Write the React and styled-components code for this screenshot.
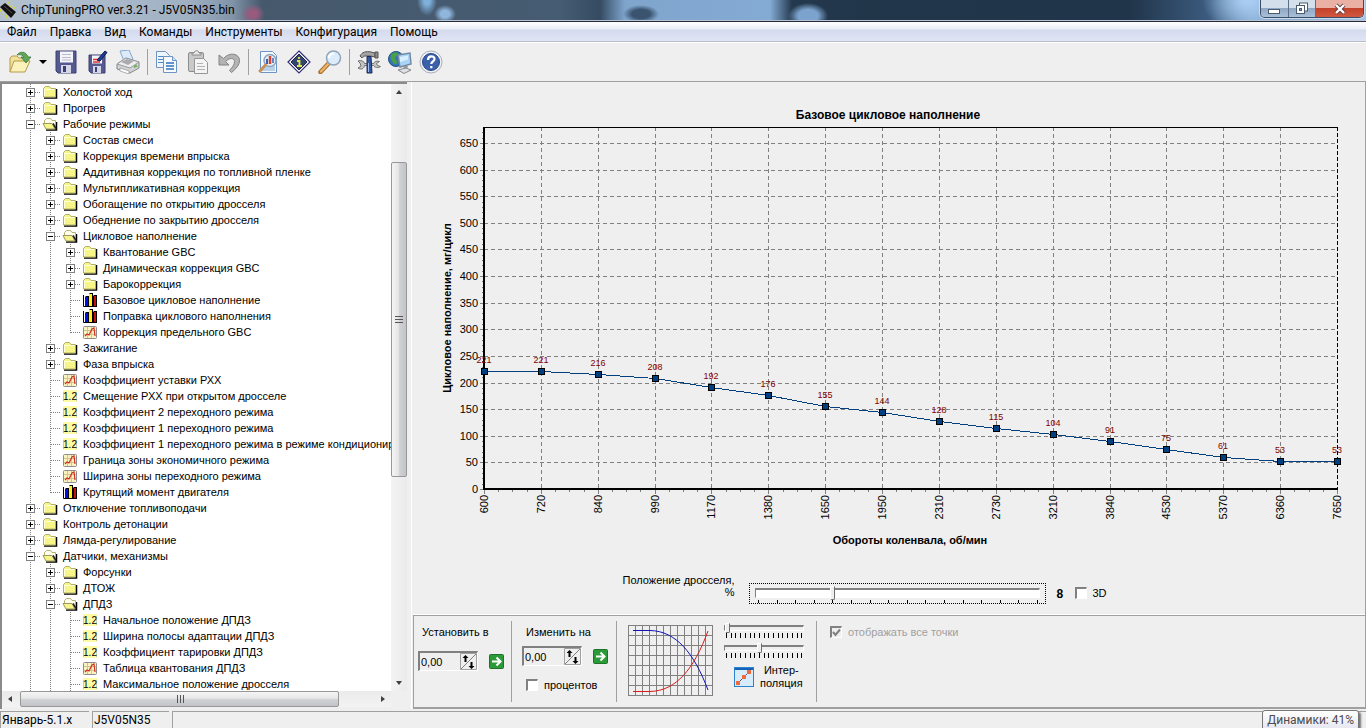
import { useState } from "react";
import styled, { createGlobalStyle } from "styled-components";

const GlobalStyle = createGlobalStyle`
  * { box-sizing: border-box; }
  body {
    margin: 0;
    background: #fff;
    color: #000;
    font: 11px/14px "Liberation Sans", Arial, sans-serif;
  }
  button, input { font: inherit; color: inherit; }
`;

/* ---------- window frame ---------- */

const Window = styled.div`
  position: relative;
  display: flex;
  flex-direction: column;
  height: 100vh;
  margin-right: 6px;
  background: #efefef;
  overflow: hidden;
`;

const TitleBar = styled.header`
  display: flex;
  align-items: flex-start;
  height: 22px;
  flex: none;
  border-bottom: 1px solid #232b3a;
  box-shadow: inset 0 -1px 0 #b9c3d2;
  background:
    radial-gradient(ellipse 12px 10px at 253px 14px, #9a5a7e 30%, transparent),
    radial-gradient(ellipse 11px 9px at 445px 14px, #8fb6dc 40%, transparent),
    radial-gradient(ellipse 10px 16px at 427px 0, #7fb0dc 30%, transparent),
    radial-gradient(ellipse 18px 9px at 641px 14px, #3a536f 50%, transparent),
    radial-gradient(ellipse 20px 13px at 808px 16px, #7ba3cd 50%, transparent),
    radial-gradient(ellipse 46px 34px at 1248px 0, #a9cdf2 10%, transparent),
    linear-gradient(
      90deg,
      #b3c1cf 0,
      #acbccc 90px,
      #9fb0c3 190px,
      #8194a8 232px,
      #46596c 262px,
      #465c72 560px,
      #344b62 600px,
      #7fa5cd 625px,
      #84abd4 770px,
      #24394e 792px,
      #22364a 860px,
      #21354a 1130px,
      #3c5c80 1210px,
      #7ba0c8 1250px,
      #a8c4e2 100%
    );
`;

const Title = styled.h1`
  display: flex;
  align-items: center;
  gap: 4px;
  flex: 1;
  height: 20px;
  margin: 0;
  font: 12px/20px Roboto, "Open Sans", sans-serif;
  svg { flex: none; }
`;

const Caption = styled.div`
  display: flex;
  width: 104px;
  height: 18px;
  margin-right: 2px;
  border: 1px solid #3b4d63;
  border-top: 0;
  border-radius: 0 0 5px 5px;
  overflow: hidden;
  box-shadow: 0 0 0 1px #c8daec;
`;

const CaptionButton = styled.button`
  display: grid;
  place-items: center;
  flex: ${(p) => (p.$close ? 47 : 27)};
  padding: 0;
  border: 0;
  border-left: 1px solid #5c6f86;
  background: ${(p) =>
    p.$close
      ? "linear-gradient(#eab0a3 0 45%, #c2402a 46%, #d0583f)"
      : "linear-gradient(#d3dfeb 0 45%, #8ea6c2 46%, #a9c0da)"};
  &:first-child { border-left: 0; }
`;

const MenuBar = styled.nav`
  display: flex;
  gap: 13px;
  flex: none;
  height: 20px;
  padding: 0 7px;
  border-bottom: 1px solid #b9bdca;
  background: linear-gradient(#fff, #e9edf6 7px, #d4dbed 8px, #e0e5f5);
  font: 12px/20px Roboto, "Open Sans", sans-serif;
`;

const MenuItem = styled.a`
  color: #000;
  text-decoration: none;
`;

const ToolBar = styled.div`
  display: flex;
  align-items: center;
  flex: none;
  height: 40px;
  padding-left: 4px;
  border-top: 1px solid #fff;
  border-bottom: 1px solid #a0a0a0;
`;

const ToolButton = styled.button`
  display: grid;
  place-items: center;
  width: ${(p) => (p.$narrow ? 15 : 31)}px;
  height: 30px;
  padding: 0;
  border: 0;
  background: none;
`;

const ToolSeparator = styled.i`
  width: 1px;
  height: 26px;
  margin: 0 3px 0 4px;
  background: #a0a0a0;
`;

const Body = styled.div`
  display: flex;
  flex: 1;
  min-height: 0;
`;

/* ---------- tree ---------- */

const TreePane = styled.aside`
  flex: none;
  width: 412px;
  padding-right: 4px;
  border-right: 1px solid #fff;
`;

const TreeFrame = styled.div`
  display: grid;
  grid-template: minmax(0, 1fr) 16px / minmax(0, 1fr) 16px;
  height: 100%;
  padding-bottom: 2px;
  border-left: 2px solid #8a8a8a;
  border-top: 2px solid #8a8a8a;
`;

const Tree = styled.ul`
  margin: 0;
  padding: 0 0 0 18px;
  overflow: hidden;
  list-style: none;
  background: #fff;
`;

const TreeRow = styled.li`
  display: flex;
  align-items: center;
  height: 16px;
  white-space: nowrap;
  line-height: 16px;
  svg { flex: none; display: block; }
`;

const TreeToggle = styled.button`
  flex: none;
  padding: 0;
  border: 0;
  background: none;
`;

const TreeLabel = styled.span`
  padding-left: 5px;
`;

const ScrollBar = styled.div`
  display: flex;
  flex-direction: ${(p) => (p.$horizontal ? "row" : "column")};
  align-items: stretch;
  background: linear-gradient(${(p) => (p.$horizontal ? "0deg" : "90deg")}, #f3f3f3, #ebebeb);
`;

const ScrollButton = styled.button`
  display: grid;
  place-items: center;
  flex: none;
  width: 16px;
  height: 16px;
  padding: 0;
  border: 0;
  background: none;
`;

const ScrollTrack = styled.div`
  flex: ${(p) => p.$size};
`;

const ScrollThumb = styled.div`
  display: grid;
  place-items: center;
  flex: ${(p) => p.$size};
  border: 1px solid #979797;
  border-radius: 2px;
  background: linear-gradient(${(p) => (p.$horizontal ? "180deg" : "90deg")}, #f5f5f5, #e6e6e8 45%, #d0d1d4 55%, #c2c4c8);
`;

/* ---------- chart ---------- */

const Main = styled.main`
  display: flex;
  flex-direction: column;
  flex: 1;
  min-width: 0;
  border-right: 1px solid #a0a0a0;
`;

const ChartSvg = styled.svg`
  display: block;
  width: 100%;
  min-height: 0;
  font: 11px "Liberation Sans", Arial, sans-serif;
`;

const ThrottleRow = styled.div`
  display: flex;
  justify-content: center;
  align-items: flex-end;
  height: 42px;
  padding: 12px 49px 0 0;
`;

const ThrottleLabel = styled.label`
  align-self: flex-start;
  width: 114px;
  margin-right: 14px;
  text-align: right;
  line-height: 12px;
`;

const ThrottleBox = styled.div`
  width: 297px;
  height: 21px;
  padding: 1px 5px 0;
  border: 1px dotted #000;
  svg { display: block; }
`;

const Slider = styled.input`
  display: block;
  appearance: none;
  width: 100%;
  height: ${(p) => (p.$small ? 11 : 15)}px;
  margin: 0;
  background: none;
  &::-webkit-slider-runnable-track {
    height: ${(p) => (p.$small ? 6 : 10)}px;
    background: ${(p) => (p.$small ? "#efefef" : "#fff")};
    border: 1px solid #fff;
    border-top: 2px solid #808080;
    border-left: 1px solid #808080;
  }
  &::-webkit-slider-thumb {
    appearance: none;
    width: 5px;
    height: ${(p) => (p.$small ? 10 : 14)}px;
    margin-top: -4px;
    background: #efefef;
    border: 1px solid #fff;
    border-right-color: #6c6c6c;
    border-bottom-color: #6c6c6c;
    border-radius: 0 0 2px 2px;
  }
`;

const ThrottleValue = styled.output`
  margin-left: 11px;
  width: 18px;
  font-weight: bold;
  font-size: 12px;
  line-height: 20px;
`;

const CheckLabel = styled.label`
  display: flex;
  align-items: center;
  gap: 6px;
  height: 14px;
  color: ${(p) => (p.$disabled ? "#a0a0a0" : "#000")};
`;

const ThrottleCheck = styled.div`
  width: 33px;
  margin-bottom: 4px;
`;

const CheckBox = styled.input`
  appearance: none;
  width: 12px;
  height: 12px;
  margin: 0;
  background: #fff;
  border: 1px solid #fff;
  border-top: 2px solid #808080;
  border-left: 2px solid #808080;
  &:disabled { background: #efefef; }
  &:checked {
    background: #efefef
      url("data:image/svg+xml,%3Csvg xmlns='http://www.w3.org/2000/svg' viewBox='0 0 9 9'%3E%3Cpath d='M1 4l2.5 3L8 1.5' fill='none' stroke='%23808080' stroke-width='2'/%3E%3C/svg%3E")
      center / 9px no-repeat;
  }
`;

/* ---------- edit panel ---------- */

const EditPanel = styled.section`
  display: flex;
  flex: none;
  height: 94px;
  margin: auto 0 0 1px;
  padding: 5px 0;
  border: 1px solid #a0a0a0;
  border-width: 1px 0 2px 1px;
  box-shadow: 0 -1px 0 #fff;
`;

const EditGroup = styled.div`
  display: flex;
  flex-direction: ${(p) => (p.$row ? "row" : "column")};
  gap: ${(p) => p.$gap || 0}px;
  width: ${(p) => (p.$width ? `${p.$width}px` : "auto")};
  padding: 4px 0 0 ${(p) => p.$indent}px;
  & + & { border-left: 1px solid #a0a0a0; }
`;

const EditCaption = styled.label`
  padding-left: 4px;
`;

const SpinRow = styled.div`
  display: flex;
  align-items: center;
  gap: 11px;
`;

const Spin = styled.div`
  display: flex;
  width: 60px;
  height: 20px;
  border: 1px solid #fff;
  border-top: 2px solid #808080;
  border-left: 2px solid #808080;
`;

const SpinInput = styled.input`
  flex: 1;
  min-width: 0;
  padding: 0 1px;
  border: 0;
  background: none;
`;

const IconButton = styled.button`
  display: flex;
  align-items: center;
  gap: 6px;
  padding: 0;
  border: 0;
  background: none;
  text-align: center;
  line-height: 13px;
`;

const CheckLine = styled.div`
  padding: 5px 0 0 4px;
`;

const CurveSliders = styled.div`
  display: flex;
  flex-direction: column;
  width: 80px;
  margin-top: -3px;
  svg { display: block; }
`;

const Curve = styled.div`
  height: 20px;
`;

const Interpolation = styled(IconButton)`
  padding-left: 10px;
  margin-top: 2px;
`;

/* ---------- status bar ---------- */

const StatusBar = styled.footer`
  display: flex;
  gap: 3px;
  flex: none;
  height: 17px;
  margin-top: 2px;
  font: 12px/17px Roboto, "Open Sans", sans-serif;
`;

const StatusPane = styled.div`
  width: ${(p) => (p.$width ? `${p.$width}px` : "auto")};
  flex: ${(p) => (p.$width ? "none" : 1)};
  padding-left: 1px;
  border: 1px solid #a0a0a0;
  border-width: 1px 0 0 1px;
  white-space: nowrap;
  overflow: hidden;
`;

const Tooltip = styled.div`
  position: absolute;
  right: 7px;
  bottom: -3px;
  padding: 0 4px;
  border: 1px solid #767676;
  border-radius: 3px;
  background: linear-gradient(#fff, #e4e5f0);
  box-shadow: 2px 2px 2px #777;
  color: #4c4c4c;
  font: 12px/19px Roboto, "Open Sans", sans-serif;
`;

/* ---------- data ---------- */

const menu = ["Файл", "Правка", "Вид", "Команды", "Инструменты", "Конфигурация", "Помощь"];

// [guides, icon, label]; guides, one per level:
// | line, + closed, - open, t leaf, L last leaf
const tree = [
  ["+", "folder", "Холостой ход"],
  ["+", "folder", "Прогрев"],
  ["-", "open", "Рабочие режимы"],
  ["|+", "folder", "Состав смеси"],
  ["|+", "folder", "Коррекция времени впрыска"],
  ["|+", "folder", "Аддитивная коррекция по топливной пленке"],
  ["|+", "folder", "Мультипликативная коррекция"],
  ["|+", "folder", "Обогащение по открытию дросселя"],
  ["|+", "folder", "Обеднение по закрытию дросселя"],
  ["|-", "open", "Цикловое наполнение"],
  ["||+", "folder", "Квантование GBC"],
  ["||+", "folder", "Динамическая коррекция GBC"],
  ["||+", "folder", "Барокоррекция"],
  ["||t", "bars", "Базовое цикловое наполнение"],
  ["||t", "bars", "Поправка циклового наполнения"],
  ["||L", "curve", "Коррекция предельного GBC"],
  ["|+", "folder", "Зажигание"],
  ["|+", "folder", "Фаза впрыска"],
  ["|t", "curve", "Коэффициент уставки РХХ"],
  ["|t", "number", "Смещение РХХ при открытом дросселе"],
  ["|t", "number", "Коэффициент 2 переходного режима"],
  ["|t", "number", "Коэффициент 1 переходного режима"],
  ["|t", "number", "Коэффициент 1 переходного режима в режиме кондиционир"],
  ["|t", "curve", "Граница зоны экономичного режима"],
  ["|t", "curve", "Ширина зоны переходного режима"],
  ["|L", "bars", "Крутящий момент двигателя"],
  ["+", "folder", "Отключение топливоподачи"],
  ["+", "folder", "Контроль детонации"],
  ["+", "folder", "Лямда-регулирование"],
  ["-", "open", "Датчики, механизмы"],
  ["|+", "folder", "Форсунки"],
  ["|+", "folder", "ДТОЖ"],
  ["|-", "open", "ДПДЗ"],
  ["||t", "number", "Начальное положение ДПДЗ"],
  ["||t", "number", "Ширина полосы адаптации ДПДЗ"],
  ["||t", "number", "Коэффициент тарировки ДПДЗ"],
  ["||t", "curve", "Таблица квантования ДПДЗ"],
  ["||t", "number", "Максимальное положение дросселя"],
];

const rpm = [600, 720, 840, 990, 1170, 1380, 1650, 1950, 2310, 2730, 3210, 3840, 4530, 5370, 6360, 7650];
const fill = [221, 221, 216, 208, 192, 176, 155, 144, 128, 115, 104, 91, 75, 61, 53, 53];

/* ---------- tree pieces ---------- */

const Guide = ({ kind }) => {
  const box = kind === "+" || kind === "-";
  return (
    <svg width="20" height="16" aria-hidden="true">
      <g stroke="#808080" strokeDasharray="1 1">
        <path d={kind === "L" ? "M10.5 0V9" : "M10.5 0V16"} />
        {kind !== "|" && <path d="M11 8.5H21" />}
      </g>
      {box && (
        <>
          <rect x="6.5" y="4.5" width="8" height="8" fill="#fff" stroke="#808080" />
          <path d={kind === "+" ? "M8 8.5h5M10.5 6v5" : "M8 8.5h5"} stroke="#000" />
        </>
      )}
    </svg>
  );
};

const treeIcons = {
  folder: (
    <>
      <path d="M2 14h12.500V5" fill="none" stroke="#000" strokeWidth="1.500" />
      <path d="M1.500 13V4.500l2-2h4l1.500 2h4.500V13z" fill="#f8f588" stroke="#b3b06a" />
      <path d="M2.500 12V5.500h10" fill="none" stroke="#fffde0" />
    </>
  ),
  open: (
    <>
      <path d="M4 14h10.500V6" fill="none" stroke="#000" strokeWidth="1.500" />
      <path d="M2.500 8V4.500l2-2h4l1.500 2h3.500V13" fill="#fffef0" stroke="#b3b06a" />
      <path d="M1 7.500h9L13 13H4z" fill="#f8f588" stroke="#9a9860" />
      <path d="M11 7.500l3 5" stroke="#222" strokeWidth="1.500" />
    </>
  ),
  bars: (
    <>
      <path d="M1.500 3v11.500H15" fill="none" stroke="#000" />
      <path d="M3 5l1-1h3v10H3zM7 2l1-1h3v13H7zM11 4l1-1h3v11h-4z" fill="#000" />
      <path d="M3 5h3v9H3z" fill="#0010e0" />
      <path d="M7 2h3v12H7z" fill="#ffee20" />
      <path d="M12 4h2v10h-2z" fill="#c01515" />
    </>
  ),
  curve: (
    <>
      <rect x="1.500" y="2.500" width="13" height="12" rx="1" fill="#fbf3c4" stroke="#8d8d8d" />
      <path d="M5.500 3v11M9.500 3v11M2 6.500h12M2 10.500h12" stroke="#cfc690" />
      <path d="M3 12l2-2 2 1 3-6 2-1 1 8" fill="none" stroke="#d03020" strokeWidth="1.200" />
    </>
  ),
  number: (
    <>
      <path d="M1 2h14v12H1z" fill="#fdfba4" />
      <path d="M1.500 4v9M14.500 4v9" stroke="#c9c9b0" />
      <text x="8" y="12" fontSize="10" textAnchor="middle">1.2</text>
    </>
  ),
};

const TreeItem = ({ guides, icon, label }) => (
  <TreeRow>
    {[...guides].map((kind, i) =>
      kind === "+" || kind === "-" ? (
        <TreeToggle key={i} aria-label={label} aria-expanded={kind === "-"}>
          <Guide kind={kind} />
        </TreeToggle>
      ) : (
        <Guide key={i} kind={kind} />
      )
    )}
    <svg width="18" height="16" viewBox="-2 0 18 16" aria-hidden="true">{treeIcons[icon]}</svg>
    <TreeLabel>{label}</TreeLabel>
  </TreeRow>
);

/* ---------- toolbar icons ---------- */

const Floppy = () => (
  <>
    <path d="M2 1h20v22H4l-2-2z" fill="#54598f" stroke="#3c4073" />
    <path d="M6 1.500h13v11H6z" fill="#f4f4fa" />
    <path d="M8 4.500h9M8 7.500h9M8 10h9" stroke="#b9bccb" />
    <path d="M7 15h10v8H7z" fill="#d5d7e6" />
    <path d="M9 16h3v6H9z" fill="#3c4073" />
  </>
);

const toolIcons = {
  open: (
    <>
      <path d="M2 22V8l2-2h5l2 2h8v3" fill="#f0e09a" stroke="#b59b48" />
      <path d="M2 22l4-11h16l-5 11z" fill="#fbf1bb" stroke="#b59b48" />
      <path d="M9 5c3-4 9-4 11 2h3l-5 6-5-6h3c-1-2-4-3-7-2z" fill="#62a758" stroke="#3a7a38" strokeWidth=".8" />
    </>
  ),
  save: <Floppy />,
  saveAs: (
    <>
      <path d="M4 5h16v18H6l-2-2z" fill="#54598f" stroke="#3c4073" />
      <path d="M7 5.500h10v8H7z" fill="#f4f4fa" />
      <path d="M8 12h7M8 9.500h5" stroke="#d33" strokeWidth="1.500" />
      <path d="M8 16h8v7H8z" fill="#d5d7e6" />
      <path d="M10 17h2v5h-2z" fill="#3c4073" />
      <path d="M12 10l8-9 2 1.500-7 8.500z" fill="#1c3f94" stroke="#0c1c50" />
    </>
  ),
  print: (
    <>
      <path d="M4 1l9-1 4 9-9 2z" fill="#dcebfb" stroke="#86a6cc" />
      <path d="M1 14l9-6 13 4v6l-9 5-13-4z" fill="#d2d3d5" stroke="#85878b" />
      <path d="M1 14l13 4 9-6-13-4z" fill="#ededee" stroke="#9a9b9f" />
      <path d="M5 12l6-3 7 2-6 4z" fill="#a9abb0" />
      <path d="M4 18l9 3v3l-9-3z" fill="#fff" stroke="#909296" strokeWidth=".7" />
      <path d="M18 17l3-1.500" stroke="#6bb05b" strokeWidth="2" />
    </>
  ),
  copy: (
    <>
      <path d="M1.500 1.500h9l4 4v12h-13z" fill="#eef5fd" stroke="#6f93c2" />
      <path d="M3 6.500h8M3 9.500h8M3 12.500h6" stroke="#4d8ac8" />
      <path d="M8.500 6.500h9l4 4v12h-13z" fill="#f5faff" stroke="#6f93c2" />
      <path d="M17.500 6.500v4h4" fill="#cfe0f3" stroke="#6f93c2" />
      <path d="M11 13h8M11 16h8M11 19h8" stroke="#2f73bb" strokeWidth="1.500" />
    </>
  ),
  paste: (
    <>
      <rect x="2.500" y="2.500" width="15" height="19" rx="1.500" fill="#c9c9c9" stroke="#8c8c8c" />
      <path d="M6 5V3h2c0-3 5-3 5 0h2v2z" fill="#e8e8e8" stroke="#8c8c8c" />
      <path d="M8.500 8.500h9l4 4v11h-13z" fill="#f4f4f4" stroke="#969696" />
      <path d="M11 13.500h6M11 16.500h8M11 19.500h8" stroke="#b1b1b1" />
    </>
  ),
  undo: (
    <path
      d="M2 5v10h10l-3.500-3.500c4-4 9-4 9 0 0 3-1.500 5-5 9l2 2c5-4 8-8 8-12 0-7-10-9-16-2z"
      fill="#b4b4b4"
      stroke="#838383"
    />
  ),
  preview: (
    <>
      <path d="M4.500 1.500h12l4 4v17h-16z" fill="#f4f9ff" stroke="#6f93c2" />
      <path d="M6 16h13v5H6z" fill="#b7d0ec" />
      <circle cx="14" cy="10.500" r="6" fill="#e3eefa" stroke="#8da4bd" strokeWidth="1.500" />
      <path d="M11 9v5" stroke="#3b60b0" strokeWidth="2" />
      <path d="M14 6v8" stroke="#d8452e" strokeWidth="2.500" />
      <path d="M17 8v5" stroke="#3b60b0" strokeWidth="1.500" />
      <path d="M9.500 15L4 21" stroke="#c9915a" strokeWidth="3" strokeLinecap="round" />
    </>
  ),
  info: (
    <>
      <path d="M12 1l11 11-11 11L1 12z" fill="#fff" stroke="#30307a" strokeWidth="1.200" />
      <path d="M12 4l8 8-8 8-8-8z" fill="#32476f" stroke="#22224f" />
      <path d="M12 7v2M10 11h2.500v5M10 16h5" fill="none" stroke="#e6e64a" strokeWidth="1.800" />
    </>
  ),
  find: (
    <>
      <path d="M11 13l-8.500 9" stroke="#a86f2c" strokeWidth="4.500" strokeLinecap="round" />
      <path d="M11 13l-8 8.500" stroke="#eab56b" strokeWidth="2.500" strokeLinecap="round" />
      <circle cx="15.500" cy="8" r="7" fill="#dcecfb" stroke="#8fa4ba" strokeWidth="1.500" />
      <path d="M11 8c0-3 2-4.500 5-4.500" fill="none" stroke="#fff" strokeWidth="2" />
    </>
  ),
  tools: (
    <>
      <path d="M3 6c2-4 6-5 11-4l4 1v4l-5-1H8c-1 0-2 1-3 2z" fill="#a3a3a3" stroke="#555" />
      <path d="M18 2h3v6h-3z" fill="#8c8c8c" stroke="#555" />
      <path d="M1 11c3-1 6 0 6.500 2.500h9c1-2 3-3 6-2l-3 2 1 2 3 1c-2 2-6 1-7-1h-9C7 19 4 20 1 18l3-2-1-3z" fill="#c4c4c4" stroke="#666" strokeWidth=".9" />
      <path d="M10 6.500h4L15 23h-5z" fill="#33589e" stroke="#1d2c55" />
      <path d="M11.500 13v9" stroke="#9fbdf0" />
    </>
  ),
  network: (
    <>
      <circle cx="8" cy="9" r="7.500" fill="#3474b8" stroke="#24507f" />
      <path d="M3 5c3-4 7-3 7-1s-3 2-3 4 3 2 2 5-4 0-5-2-2-4-1-6z" fill="#48a048" />
      <path d="M10 5l12-2 1 11-11 3z" fill="#a7d4f7" stroke="#7287a0" strokeWidth="1.400" />
      <path d="M12 7l8-1.500v4L12 12z" fill="#d9effd" />
      <path d="M15 16h5l-1 3h-3z" fill="#999" />
      <path d="M10 20l8-2 5 2-7 3.500z" fill="#dfe1e4" stroke="#85888d" />
    </>
  ),
  help: (
    <>
      <circle cx="12" cy="12" r="11" fill="#eff1f5" stroke="#a8afbc" />
      <circle cx="12" cy="12" r="8.500" fill="#3b61ab" stroke="#28478b" />
      <path d="M9 10c0-5 6.500-4.500 6.500-1 0 2.500-3.200 2.400-3.200 5M12.300 16v2.300" fill="none" stroke="#fff" strokeWidth="2.200" />
    </>
  ),
};

const Tool = ({ name, title }) => (
  <ToolButton aria-label={title}>
    <svg width="24" height="24" viewBox="0 0 24 24">{toolIcons[name]}</svg>
  </ToolButton>
);

/* ---------- chart ---------- */

const LEFT = 72;
const RIGHT = 925;
const TOP = 45;
const BOTTOM = 407;
const xAt = (i) => Math.round(LEFT + (i * (RIGHT - LEFT)) / 15);
const yAt = (v) => Math.round(BOTTOM - (v * (BOTTOM - TOP)) / 680);
const yTicks = Array.from({ length: 14 }, (_, i) => i * 50);

const FillChart = () => (
  <ChartSvg viewBox="0 0 953 480" role="img" aria-label="Базовое цикловое наполнение">
    <text x="476" y="37" fontSize="12" fontWeight="bold" textAnchor="middle">
      Базовое цикловое наполнение
    </text>
    <g stroke="#808080" strokeDasharray="4 3" shapeRendering="crispEdges">
      {yTicks.slice(1).map((v) => (
        <path key={v} d={`M${LEFT} ${yAt(v) + 0.5}H${RIGHT}`} />
      ))}
      {rpm.slice(1, -1).map((r, i) => (
        <path key={r} d={`M${xAt(i + 1) + 0.5} ${TOP}V${BOTTOM}`} />
      ))}
    </g>
    <g stroke="#808080" shapeRendering="crispEdges">
      {yTicks.map((v) => (
        <path key={v} d={`M${LEFT - 4} ${yAt(v) + 0.5}h4`} />
      ))}
      {Array.from({ length: 68 }, (_, i) => (
        <path key={i} d={`M${LEFT - 2} ${yAt(i * 10) + 0.5}h2`} />
      ))}
      {Array.from({ length: 61 }, (_, i) => (
        <path key={i} d={`M${xAt(i / 4) + 0.5} ${BOTTOM}v${i % 4 ? 3 : 5}`} />
      ))}
    </g>
    <g stroke="#000" shapeRendering="crispEdges">
      <path d={`M${LEFT} ${TOP + 0.5}H${RIGHT}`} />
      <path d={`M${RIGHT + 0.5} ${TOP}V${BOTTOM}`} strokeDasharray="4 2" />
      <path d={`M${LEFT} ${TOP}V${BOTTOM + 1}M${LEFT - 1} ${BOTTOM}H${RIGHT + 1}`} strokeWidth="2" />
    </g>
    {yTicks.map((v) => (
      <text key={v} x={LEFT - 6} y={yAt(v) + 4} textAnchor="end">{v}</text>
    ))}
    {rpm.map((r, i) => (
      <text key={r} transform={`translate(${xAt(i) + 4} ${BOTTOM + 6}) rotate(-90)`} textAnchor="end">{r}</text>
    ))}
    <polyline
      points={fill.map((v, i) => `${xAt(i) + 0.5},${yAt(v) + 0.5}`).join(" ")}
      fill="none"
      stroke="#004080"
      shapeRendering="crispEdges"
    />
    {fill.map((v, i) => (
      <g key={i}>
        <rect x={xAt(i) - 2.5} y={yAt(v) - 2.5} width="6" height="6" fill="#004080" stroke="#000" />
        <text x={xAt(i)} y={yAt(v) - 8} fontSize="9" fill="#800000" textAnchor="middle">{v}</text>
      </g>
    ))}
    <text transform="translate(39 226) rotate(-90)" fontWeight="bold" textAnchor="middle">
      Цикловое наполнение, мг/цикл
    </text>
    <text x="498" y="462" fontWeight="bold" textAnchor="middle">Обороты коленвала, об/мин</text>
  </ChartSvg>
);

const Ticks = ({ count, step, inset, height }) => (
  <svg width={inset * 2 + (count - 1) * step + 1} height={height} aria-hidden="true">
    {Array.from({ length: count }, (_, i) => (
      <path key={i} d={`M${Math.round(inset + i * step) + 0.5} 0v${height}`} stroke="#000" />
    ))}
  </svg>
);

/* ---------- edit panel pieces ---------- */

const SpinEdit = ({ id, action }) => (
  <SpinRow>
    <Spin>
      <SpinInput id={id} defaultValue="0,00" />
      <IconButton aria-label="Изменить значение">
        <svg width="17" height="17">
          <path d="M.5 .5h16v16H.5z" fill="#efefef" stroke="#a0a0a0" />
          <path d="M1 16L16 1" stroke="#808080" />
          <path d="M5.500 2L8.500 5H6.500v4h-2V5h-2zM11.500 16L14.500 13h-2V9h-2v4h-2z" />
        </svg>
      </IconButton>
    </Spin>
    <IconButton aria-label={action}>
      <svg width="15" height="15">
        <rect x=".5" y=".5" width="14" height="14" rx="1" fill="#2c9a38" stroke="#1d7428" />
        <path d="M3 7.500h8M7.500 3.500l4 4-4 4" fill="none" stroke="#fff" strokeWidth="2" />
      </svg>
    </IconButton>
  </SpinRow>
);

const CurveGraph = () => (
  <svg width="85" height="71" aria-hidden="true">
    <g stroke="#808080" shapeRendering="crispEdges">
      {Array.from({ length: 13 }, (_, i) => (
        <path key={i} d={`M${i * 7 + 0.5} 0V71`} />
      ))}
      {Array.from({ length: 8 }, (_, i) => (
        <path key={i} d={`M0 ${i * 10 + 0.5}H85`} />
      ))}
    </g>
    <path d="M5 5.500H22C48 6 66 28 80 65" fill="none" stroke="#1414b4" />
    <path d="M5 66.500H22C48 66 66 44 80 6" fill="none" stroke="#d81c1c" />
  </svg>
);

const arrows = {
  up: "M5 10l3-4 3 4z",
  down: "M5 6l3 4 3-4z",
  left: "M10 5L6 8l4 3z",
  right: "M6 5l4 3-4 3z",
};

const Arrow = ({ to, label }) => (
  <ScrollButton aria-label={label}>
    <svg width="16" height="16"><path d={arrows[to]} fill="#404040" /></svg>
  </ScrollButton>
);

export default function App() {
  const [throttle, setThrottle] = useState(4);

  return (
    <>
      <GlobalStyle />
      <Window>
        <TitleBar>
          <Title>
            <svg width="17" height="18" aria-hidden="true">
              <path d="M0 6l5-4 11 9-5 6z" fill="#111" />
              <path d="M4 5l8 7" stroke="#555" />
              <path
                d="M1 8l-1 3M4 11l-1 3M7 14l-1 3M7 3l2-2M10 6l2-2M13 8l2-2"
                stroke="#d8d53a"
                strokeWidth="1.200"
              />
            </svg>
            ChipTuningPRO ver.3.21 - J5V05N35.bin
          </Title>
          <Caption>
            <CaptionButton aria-label="Свернуть">
              <svg width="12" height="14"><rect x=".5" y="7.500" width="11" height="4" fill="#fff" stroke="#4c5a6e" /></svg>
            </CaptionButton>
            <CaptionButton aria-label="Развернуть">
              <svg width="12" height="13">
                <rect x="3.500" y="1" width="8" height="8" fill="#fff" stroke="#4c5a6e" />
                <rect x=".5" y="3.500" width="8" height="8" fill="#fff" stroke="#4c5a6e" />
                <rect x="3.500" y="6.500" width="2" height="2" fill="#8ea6c2" stroke="#4c5a6e" />
              </svg>
            </CaptionButton>
            <CaptionButton $close aria-label="Закрыть">
              <svg width="12" height="12">
                <path d="M2 2l8 8M10 2l-8 8" stroke="#5b3b44" strokeWidth="4" />
                <path d="M2 2l8 8M10 2l-8 8" stroke="#fff" strokeWidth="2.400" />
              </svg>
            </CaptionButton>
          </Caption>
        </TitleBar>

        <MenuBar>
          {menu.map((item) => (
            <MenuItem key={item} href="#">{item}</MenuItem>
          ))}
        </MenuBar>

        <ToolBar>
          <Tool name="open" title="Открыть" />
          <ToolButton $narrow aria-label="Последние файлы">
            <svg width="8" height="5"><path d="M0 0h8L4 4z" /></svg>
          </ToolButton>
          <Tool name="save" title="Сохранить" />
          <Tool name="saveAs" title="Сохранить как" />
          <Tool name="print" title="Печать" />
          <ToolSeparator />
          <Tool name="copy" title="Копировать" />
          <Tool name="paste" title="Вставить" />
          <Tool name="undo" title="Отменить" />
          <ToolSeparator />
          <Tool name="preview" title="Просмотр" />
          <Tool name="info" title="Информация" />
          <Tool name="find" title="Поиск" />
          <ToolSeparator />
          <Tool name="tools" title="Настройки" />
          <Tool name="network" title="Сеть" />
          <Tool name="help" title="Помощь" />
        </ToolBar>

        <Body>
          <TreePane>
            <TreeFrame>
              <Tree>
                {tree.map(([guides, icon, label]) => (
                  <TreeItem key={label} guides={guides} icon={icon} label={label} />
                ))}
              </Tree>
              <ScrollBar>
                <Arrow to="up" label="Вверх" />
                <ScrollTrack $size={62} />
                <ScrollThumb $size={314}>
                  <svg width="8" height="8"><path d="M0 1.500h8M0 4.500h8M0 7.500h8" stroke="#555" /></svg>
                </ScrollThumb>
                <ScrollTrack $size={199} />
                <Arrow to="down" label="Вниз" />
              </ScrollBar>
              <ScrollBar $horizontal>
                <Arrow to="left" label="Влево" />
                <ScrollTrack $size={2} />
                <ScrollThumb $horizontal $size={318}>
                  <svg width="8" height="8"><path d="M1.500 0v8M4.500 0v8M7.500 0v8" stroke="#555" /></svg>
                </ScrollThumb>
                <ScrollTrack $size={36} />
                <Arrow to="right" label="Вправо" />
              </ScrollBar>
            </TreeFrame>
          </TreePane>

          <Main>
            <FillChart />
            <ThrottleRow>
              <ThrottleLabel htmlFor="throttle">Положение дросселя, %</ThrottleLabel>
              <ThrottleBox>
                <Slider
                  id="throttle"
                  type="range"
                  min="0"
                  max="15"
                  value={throttle}
                  onChange={(e) => setThrottle(Number(e.target.value))}
                />
                <Ticks count={16} step={18.6} inset={3} height={3} />
              </ThrottleBox>
              <ThrottleValue htmlFor="throttle">{throttle * 2}</ThrottleValue>
              <ThrottleCheck>
                <CheckLabel>
                  <CheckBox type="checkbox" />
                  3D
                </CheckLabel>
              </ThrottleCheck>
            </ThrottleRow>

            <EditPanel>
              <EditGroup $width={97} $indent={4} $gap={12}>
                <EditCaption htmlFor="set-to">Установить в</EditCaption>
                <SpinEdit id="set-to" action="Установить" />
              </EditGroup>
              <EditGroup $width={105} $indent={10} $gap={7}>
                <EditCaption htmlFor="change-by">Изменить на</EditCaption>
                <SpinEdit id="change-by" action="Изменить" />
                <CheckLine>
                  <CheckLabel>
                    <CheckBox type="checkbox" />
                    процентов
                  </CheckLabel>
                </CheckLine>
              </EditGroup>
              <EditGroup $row $width={200} $indent={11} $gap={11}>
                <CurveGraph />
                <CurveSliders>
                  <Curve>
                    <Slider $small type="range" min="0" max="16" defaultValue="0" aria-label="Начало кривой" />
                    <Ticks count={17} step={4.7} inset={2} height={5} />
                  </Curve>
                  <Curve>
                    <Slider $small type="range" min="0" max="16" defaultValue="7" aria-label="Изгиб кривой" />
                    <Ticks count={17} step={4.7} inset={2} height={5} />
                  </Curve>
                  <Interpolation>
                    <svg width="20" height="20">
                      <rect x=".5" y=".5" width="19" height="19" fill="#d6ebfb" stroke="#2b82cf" />
                      <path d="M1 1h18v2H1z" fill="#1263b8" />
                      <path d="M4 16L15 5" stroke="#555" />
                      <path d="M2 14h4v4H2zM8 8h4v4H8zM13 3h4v4h-4z" fill="#ef6a3a" />
                    </svg>
                    <span>Интер-<br />поляция</span>
                  </Interpolation>
                </CurveSliders>
              </EditGroup>
              <EditGroup $indent={13}>
                <CheckLabel $disabled>
                  <CheckBox type="checkbox" checked disabled readOnly />
                  отображать все точки
                </CheckLabel>
              </EditGroup>
            </EditPanel>
          </Main>
        </Body>

        <StatusBar>
          <StatusPane $width={89}>Январь-5.1.x</StatusPane>
          <StatusPane $width={77}>J5V05N35</StatusPane>
          <StatusPane />
        </StatusBar>
        <Tooltip role="tooltip">Динамики: 41%</Tooltip>
      </Window>
    </>
  );
}
